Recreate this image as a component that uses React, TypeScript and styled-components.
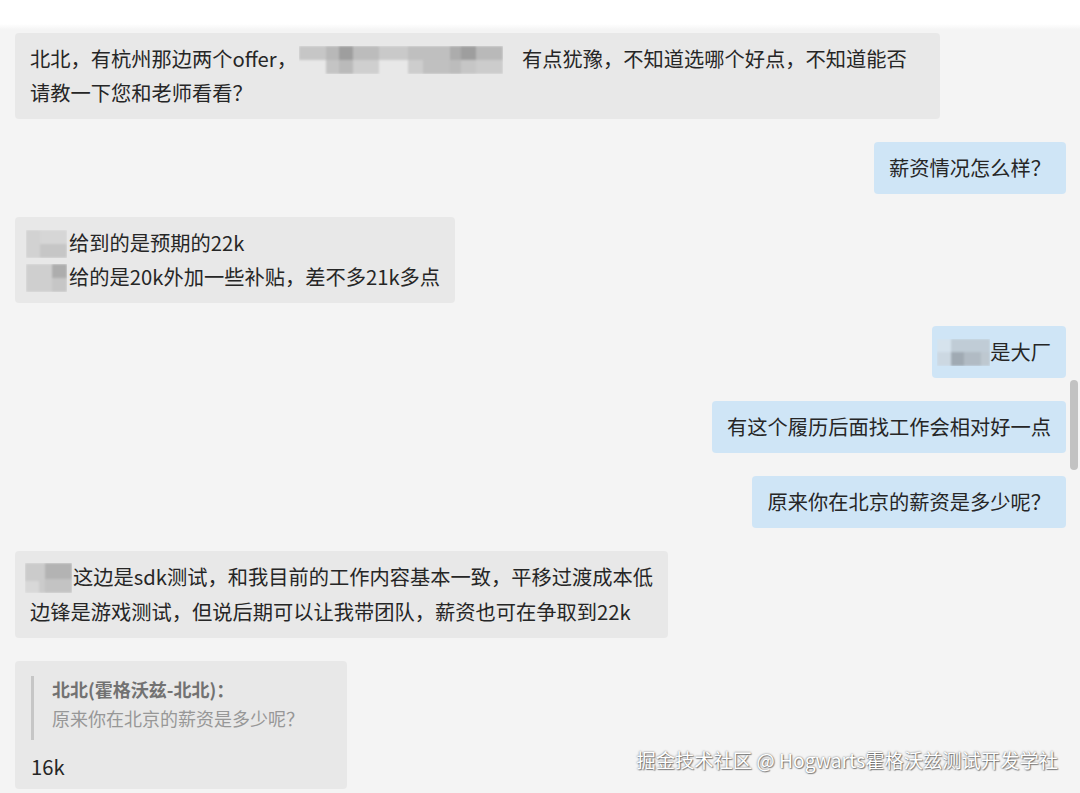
import React from 'react';
import styled, { createGlobalStyle } from 'styled-components';

const Global = createGlobalStyle`
  html, body { margin: 0; padding: 0; background: #f4f4f4; }
  body { font-family: "Noto Sans CJK SC", "Noto Sans", sans-serif; }
`;

const Page = styled.div`
  position: relative;
  width: 1080px;
  height: 793px;
  overflow: hidden;
  background: #f4f4f4;
  display: flex;
  flex-direction: column;
`;

const TopBar = styled.div`
  flex: none;
  height: 30px;
  background: linear-gradient(#ffffff 0, #ffffff 24px, #f4f4f4 30px);
`;

const MessageList = styled.div`
  display: flex;
  flex-direction: column;
  gap: 23px;
  padding: 3px 14px 0 15px;
`;

const Row = styled.div<{ $side: 'left' | 'right' }>`
  display: flex;
  justify-content: ${(p) => (p.$side === 'left' ? 'flex-start' : 'flex-end')};
`;

const Bubble = styled.div<{ $side: 'left' | 'right'; $width?: number }>`
  box-sizing: border-box;
  ${(p) => (p.$width ? `width: ${p.$width}px;` : '')}
  background: ${(p) => (p.$side === 'left' ? '#e8e8e8' : '#cfe5f6')};
  border-radius: 4px;
  padding: 9px 15px;
  font-size: 20.25px;
  line-height: 34px;
  color: #262626;
  white-space: nowrap;
`;

const QuoteBubble = styled.div`
  box-sizing: border-box;
  width: 332px;
  background: #e8e8e8;
  border-radius: 4px;
  padding: 15px 15px 6px 16px;
  color: #262626;
`;

const Quote = styled.div`
  border-left: 3px solid #c6c6c6;
  padding: 0 0 6px 18px;
  margin-bottom: 10px;
`;

const QuoteTitle = styled.div`
  font-size: 18px;
  line-height: 26px;
  font-weight: 700;
  color: #727272;
`;

const QuoteText = styled.div`
  font-size: 18px;
  line-height: 32px;
  color: #979797;
`;

const ReplyText = styled.div`
  font-size: 20.25px;
  line-height: 33px;
`;

const MosaicSvg = styled.svg<{ $ml?: number; $mr?: number }>`
  display: inline-block;
  vertical-align: middle;
  margin-left: ${(p) => p.$ml ?? 0}px;
  margin-right: ${(p) => p.$mr ?? 0}px;
  position: relative;
  top: -2px;
`;

const Watermark = styled.div`
  position: absolute;
  right: 22px;
  bottom: 20px;
  font-size: 19.3px;
  line-height: 26px;
  color: #ffffff;
  white-space: nowrap;
  text-shadow: 0 0 2px rgba(0, 0, 0, 0.6), 1px 1px 1px rgba(0, 0, 0, 0.4);
`;

const ScrollThumb = styled.div`
  position: absolute;
  right: 2px;
  top: 380px;
  width: 8px;
  height: 90px;
  border-radius: 4px;
  background: #c2c2c2;
`;

type Cell = [number, number, number, number, string];

const Mosaic: React.FC<{ w: number; h: number; cells: Cell[]; ml?: number; mr?: number }> = ({
  w,
  h,
  cells,
  ml,
  mr,
}) => (
  <MosaicSvg width={w} height={h} viewBox={`0 0 ${w} ${h}`} $ml={ml} $mr={mr}>
    <defs>
      <filter id="mb" x="-5%" y="-10%" width="110%" height="120%">
        <feGaussianBlur stdDeviation="0.8" />
      </filter>
    </defs>
    <g filter="url(#mb)">
      {cells.map(([x, y, cw, ch, c], i) => (
        <rect key={i} x={x} y={y} width={cw} height={ch} fill={c} />
      ))}
    </g>
  </MosaicSvg>
);

const mosaicOffer: Cell[] = [
  [0, 0, 27, 14, '#c6c6c6'],
  [27, 0, 13, 14, '#b8b8b8'],
  [40, 0, 14, 14, '#9e9e9e'],
  [54, 0, 26, 14, '#bcbcbc'],
  [80, 0, 29, 14, '#c9c9c9'],
  [109, 0, 42, 14, '#bfbfbf'],
  [151, 0, 11, 14, '#acacac'],
  [162, 0, 15, 14, '#9e9e9e'],
  [177, 0, 27, 14, '#b9b9b9'],
  [27, 14, 13, 14, '#c4c4c4'],
  [40, 14, 14, 14, '#bababa'],
  [54, 14, 26, 14, '#cfcfcf'],
  [109, 14, 15, 14, '#cdcdcd'],
  [124, 14, 27, 14, '#c0c0c0'],
  [151, 14, 11, 14, '#bcbcbc'],
  [162, 14, 15, 14, '#c6c6c6'],
  [177, 14, 27, 14, '#cccccc'],
];

const mosaicA1: Cell[] = [
  [0, 0, 14, 28, '#d2d2d2'],
  [14, 0, 27, 14, '#d6d6d6'],
  [14, 14, 27, 14, '#c6c6c6'],
];

const mosaicA2: Cell[] = [
  [0, 0, 26, 28, '#cfcfcf'],
  [26, 0, 15, 14, '#adadad'],
  [26, 14, 15, 14, '#c6c6c6'],
];

const mosaicB: Cell[] = [
  [0, 0, 14, 13, '#d6e3ed'],
  [14, 0, 39, 13, '#c0ccd6'],
  [0, 13, 14, 14, '#ccd8e2'],
  [14, 13, 13, 14, '#a0aab3'],
  [27, 13, 17, 14, '#b1bbc4'],
  [44, 13, 9, 14, '#bec8d0'],
];

const mosaicC: Cell[] = [
  [0, 0, 20, 30, '#cbcbcb'],
  [20, 0, 27, 16, '#b3b3b3'],
  [20, 16, 27, 14, '#c3c3c3'],
  [0, 18, 14, 12, '#d8d8d8'],
];

export default function App() {
  return (
    <Page>
      <Global />
      <TopBar />
      <MessageList>
        <Row $side="left">
          <Bubble $side="left" $width={925}>
            北北，有杭州那边两个offer，
            <Mosaic w={204} h={28} cells={mosaicOffer} ml={2} mr={19} />
            有点犹豫，不知道选哪个好点，不知道能否
            <br />
            请教一下您和老师看看？
          </Bubble>
        </Row>
        <Row $side="right">
          <Bubble $side="right">薪资情况怎么样？</Bubble>
        </Row>
        <Row $side="left">
          <Bubble $side="left">
            <Mosaic w={41} h={28} cells={mosaicA1} ml={-4} mr={2} />
            给到的是预期的22k
            <br />
            <Mosaic w={41} h={28} cells={mosaicA2} ml={-4} mr={2} />
            给的是20k外加一些补贴，差不多21k多点
          </Bubble>
        </Row>
        <Row $side="right">
          <Bubble $side="right">
            <Mosaic w={53} h={27} cells={mosaicB} ml={-10} />
            是大厂
          </Bubble>
        </Row>
        <Row $side="right">
          <Bubble $side="right">有这个履历后面找工作会相对好一点</Bubble>
        </Row>
        <Row $side="right">
          <Bubble $side="right">原来你在北京的薪资是多少呢？</Bubble>
        </Row>
        <Row $side="left">
          <Bubble $side="left">
            <Mosaic w={47} h={30} cells={mosaicC} ml={-5} mr={1} />
            这边是sdk测试，和我目前的工作内容基本一致，平移过渡成本低
            <br />
            边锋是游戏测试，但说后期可以让我带团队，薪资也可在争取到22k
          </Bubble>
        </Row>
        <Row $side="left">
          <QuoteBubble>
            <Quote>
              <QuoteTitle>北北(霍格沃兹-北北)：</QuoteTitle>
              <QuoteText>原来你在北京的薪资是多少呢？</QuoteText>
            </Quote>
            <ReplyText>16k</ReplyText>
          </QuoteBubble>
        </Row>
      </MessageList>
      <ScrollThumb />
      <Watermark>掘金技术社区 @ Hogwarts霍格沃兹测试开发学社</Watermark>
    </Page>
  );
}
